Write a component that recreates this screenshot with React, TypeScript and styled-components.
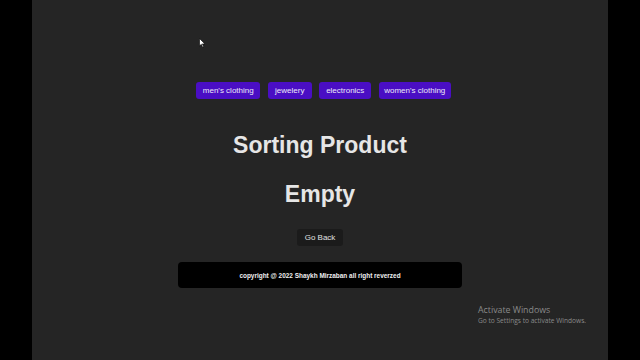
import React from "react";
import styled, { createGlobalStyle } from "styled-components";

const Global = createGlobalStyle`
  html, body { margin: 0; padding: 0; background: #000; }
  body { font-family: "Liberation Sans", Arial, sans-serif; }
`;

const Page = styled.div`
  position: relative;
  width: 576px;
  height: 360px;
  margin: 0 auto;
  background: #252525;
  display: flex;
  flex-direction: column;
  align-items: center;
  overflow: hidden;
`;

const CategoryBar = styled.div`
  display: flex;
  gap: 7.5px;
  margin-top: 82px;
  margin-left: 7px;
`;

const CategoryButton = styled.button<{ $w: number }>`
  width: ${(p) => p.$w}px;
  height: 17px;
  padding: 0;
  border: none;
  border-radius: 3px;
  background: #4a0ec4;
  color: #ece8f8;
  font-family: "Liberation Sans", Arial, sans-serif;
  font-size: 8px;
  line-height: 17px;
  cursor: pointer;
`;

const Title = styled.h1`
  margin: 33px 0 0;
  font-size: 23px;
  line-height: 26px;
  font-weight: bold;
  color: #e6e6e6;
`;

const Empty = styled.h2`
  margin: 23px 0 0;
  font-size: 23px;
  line-height: 26px;
  font-weight: bold;
  color: #e6e6e6;
`;

const BackButton = styled.button`
  margin-top: 22px;
  width: 46px;
  height: 17px;
  border: none;
  border-radius: 3px;
  background: #1b1b1b;
  color: #e0e0e0;
  font-family: "Liberation Sans", Arial, sans-serif;
  font-size: 8px;
  padding: 0;
`;

const Footer = styled.footer`
  margin-top: 16px;
  width: 284px;
  height: 26px;
  border-radius: 4px;
  background: #000;
  display: flex;
  align-items: center;
  justify-content: center;
  color: #f0f0f0;
  font-size: 6.45px;
  font-weight: bold;
`;

const Watermark = styled.div`
  position: absolute;
  left: 446px;
  top: 306px;
  color: #8a8a8a;
  line-height: 1;
`;

const WatermarkTitle = styled.div`
  font-family: "Open Sans", "Liberation Sans", sans-serif;
  font-size: 8.8px;
`;

const WatermarkSub = styled.div`
  margin-top: 3px;
  font-family: "Open Sans", "Liberation Sans", sans-serif;
  font-size: 6.6px;
`;

const Cursor = styled.svg`
  position: absolute;
  left: 167px;
  top: 38px;
`;

const cats = [
  { label: "men's clothing", w: 64 },
  { label: "jewelery", w: 44 },
  { label: "electronics", w: 52 },
  { label: "women's clothing", w: 72 },
];

export default function App() {
  return (
    <>
      <Global />
      <Page>
        <CategoryBar>
          {cats.map((c) => (
            <CategoryButton key={c.label} $w={c.w}>
              {c.label}
            </CategoryButton>
          ))}
        </CategoryBar>
        <Title>Sorting Product</Title>
        <Empty>Empty</Empty>
        <BackButton>Go Back</BackButton>
        <Footer>copyright @ 2022 Shaykh Mirzaban all right reverzed</Footer>
        <Watermark>
          <WatermarkTitle>Activate Windows</WatermarkTitle>
          <WatermarkSub>Go to Settings to activate Windows.</WatermarkSub>
        </Watermark>
        <Cursor width="7" height="10" viewBox="0 0 7 10">
          <path d="M0.5 0.5 L0.5 8 L2.3 6.3 L3.6 9.3 L4.7 8.8 L3.4 5.9 L6 5.9 Z" fill="#fff" stroke="#000" strokeWidth="0.6" />
        </Cursor>
      </Page>
    </>
  );
}
